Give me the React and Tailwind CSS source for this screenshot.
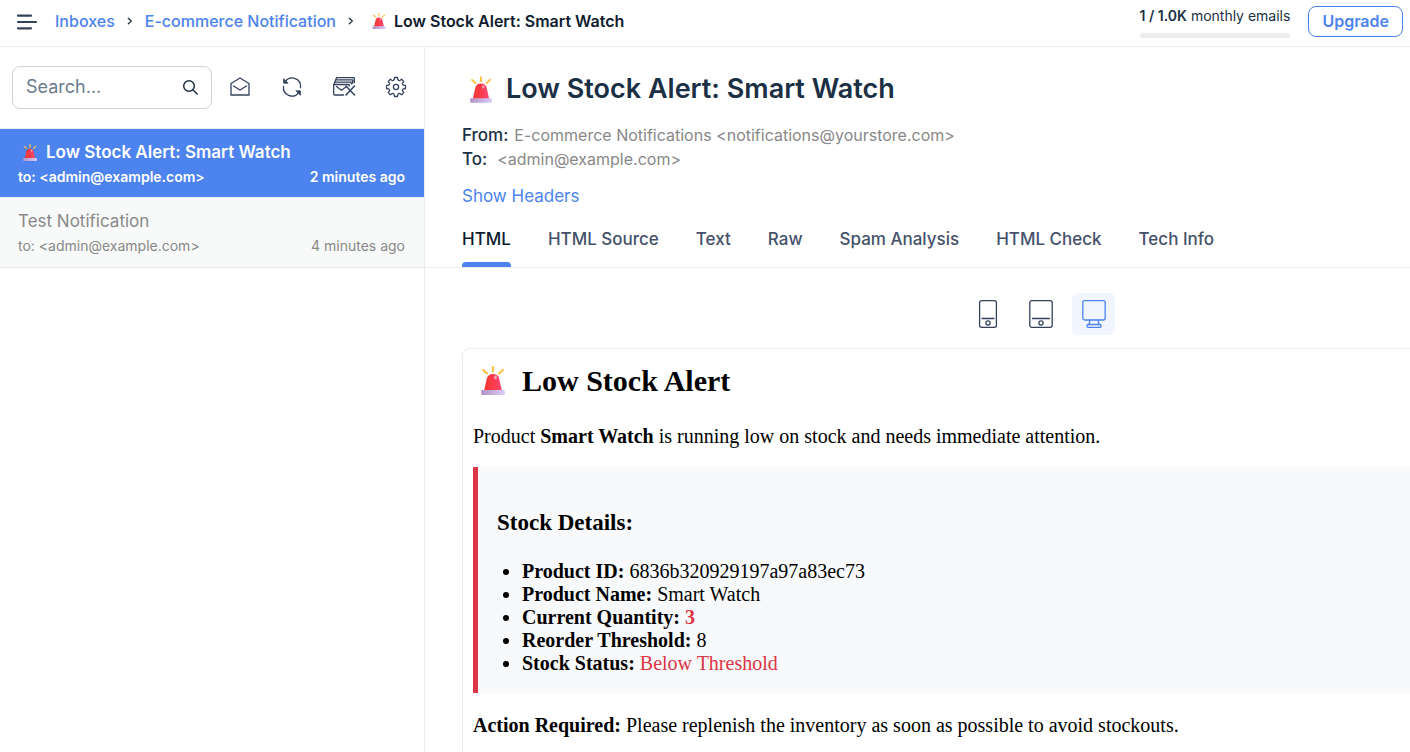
import { useId, useState } from "react";

function Siren({ className }) {
  const id = useId();
  return (
    <svg viewBox="0 0 24 29" className={className} fill="none" aria-hidden="true">
      <defs>
        <linearGradient id={id + "d"} x1="0" y1="0" x2="1" y2="0">
          <stop offset="0" stopColor="#f0392f" />
          <stop offset="0.5" stopColor="#fb3a4c" />
          <stop offset="1" stopColor="#fb4a78" />
        </linearGradient>
        <linearGradient id={id + "b"} x1="0" y1="0" x2="1" y2="0">
          <stop offset="0" stopColor="#b093c4" />
          <stop offset="1" stopColor="#dccbf8" />
        </linearGradient>
      </defs>
      <g stroke="#fbc248" strokeWidth="2.2" strokeLinecap="round">
        <path d="M12 1.200v4.300M2.200 4l3.600 3.400M21.800 4l-3.600 3.400" />
      </g>
      <path d="M3 25 5.800 12.500C6.600 9.500 8.600 8 12 8s5.400 1.500 6.200 4.500L21 25Z" fill={"url(#" + id + "d)"} />
      <ellipse cx="14.500" cy="11.500" rx="1.500" ry="1.900" fill="#ff9cab" />
      <rect x="0.200" y="24" width="23.600" height="5" rx="0.800" fill={"url(#" + id + "b)"} />
    </svg>
  );
}

function Icon({ children, className = "size-6", viewBox = "0 0 24 24" }) {
  return (
    <svg
      viewBox={viewBox}
      className={className}
      fill="none"
      stroke="currentColor"
      strokeWidth="1.3"
      strokeLinecap="round"
      strokeLinejoin="round"
      aria-hidden="true"
    >
      {children}
    </svg>
  );
}

const ChevronIcon = () => (
  <Icon className="h-2 w-1.5 text-[#1f2f46]" viewBox="0 0 6 8">
    <path d="M1.300 1.200 4.300 4l-3 2.800" />
  </Icon>
);

const gear = Array.from({ length: 8 }, (_, i) => {
  const at = (r, deg) => {
    const a = ((i * 45 + deg) * Math.PI) / 180;
    return `${(12 + r * Math.cos(a)).toFixed(2)} ${(12 + r * Math.sin(a)).toFixed(2)}`;
  };
  return `${i ? "L" : "M"}${at(9.6, -9)}L${at(9.6, 9)}L${at(7.9, 13)}Q${at(6.4, 22.5)} ${at(7.9, 32)}`;
}).join("") + "Z";

const toolbar = [
  {
    label: "Mark all as read",
    icon: (
      <Icon>
        <path d="M3 8.500 12 3l9 5.500V20H3Z" />
        <path d="m5.500 11 6.500 4 6.500-4" />
      </Icon>
    ),
  },
  {
    label: "Refresh",
    icon: (
      <Icon>
        <path d="M5.400 6.200A8.500 8.500 0 0 1 20.500 12.500M18.600 17.800A8.500 8.500 0 0 1 3.500 11.500" />
        <path d="M3.600 4v4.200h4.200ZM20.400 20v-4.200h-4.200Z" fill="currentColor" strokeWidth="0.800" />
      </Icon>
    ),
  },
  {
    label: "Delete all",
    icon: (
      <Icon>
        <path d="M11.500 20H2.700a1 1 0 0 1-1-1v-8.500a1 1 0 0 1 1-1h14.500v1.500" />
        <path d="m4.500 11.500 5 3.800 5-3.800" />
        <path d="M1.800 9.800 4.500 2.700h17.800v4.800M3.500 7.100h15.700v2M4 4.900h16.700v3.400" />
        <path d="m14 11 8.500 9M22.500 11 14 20" strokeWidth="1.500" />
      </Icon>
    ),
  },
  {
    label: "Settings",
    icon: (
      <Icon>
        <path d={gear} />
        <circle cx="12" cy="12" r="2.600" />
      </Icon>
    ),
  },
];

const messages = [
  { subject: "Low Stock Alert: Smart Watch", siren: true, age: "2 minutes ago" },
  { subject: "Test Notification", siren: false, age: "4 minutes ago" },
];

const tabs = ["HTML", "HTML Source", "Text", "Raw", "Spam Analysis", "HTML Check", "Tech Info"];

const devices = [
  {
    label: "Mobile",
    icon: (
      <Icon className="h-7 w-6" viewBox="0 0 24 28">
        <rect x="3.600" y="0.700" width="16.800" height="26.600" rx="2" />
        <path d="M6 18.500h12" />
        <circle cx="12" cy="23" r="2.100" />
      </Icon>
    ),
  },
  {
    label: "Tablet",
    icon: (
      <Icon className="h-7 w-6" viewBox="0 0 24 28">
        <rect x="0.800" y="0.700" width="22.400" height="26.600" rx="2" />
        <path d="M3.500 18.500h17" />
        <circle cx="12" cy="23" r="2.100" />
      </Icon>
    ),
  },
  {
    label: "Desktop",
    icon: (
      <Icon className="h-7 w-6" viewBox="0 0 24 28">
        <rect x="0.800" y="0.700" width="22.400" height="19.300" rx="2" />
        <path d="M8 20.200 7 24.500M16 20.200l1 4.300" />
        <rect x="5" y="24.500" width="14" height="2.800" rx="1" />
      </Icon>
    ),
  },
];

function TopBar() {
  return (
    <header className="flex h-[47px] shrink-0 items-center border-b border-[#ececec] pr-[7px] pl-4">
      <button type="button" aria-label="Menu" className="mr-[17px] text-[#34425c]">
        <svg viewBox="0 0 22 18" className="h-[18px] w-[22px]" stroke="currentColor" strokeWidth="2.200" strokeLinecap="round" aria-hidden="true">
          <path d="M2 1.700h13M2 8h18M2 14.300h13" />
        </svg>
      </button>
      <nav aria-label="Breadcrumb" className="flex items-center pb-1 text-base font-medium whitespace-nowrap">
        <a href="#inboxes" className="text-[#4c83ee]">Inboxes</a>
        <span className="mx-3"><ChevronIcon /></span>
        <a href="#inbox" className="text-[#4c83ee]">E-commerce Notification</a>
        <span className="mx-3"><ChevronIcon /></span>
        <span className="flex items-center font-semibold text-[#0d1b2e]">
          <Siren className="mr-2 ml-1.5 h-4 w-[14px]" />
          Low Stock Alert: Smart Watch
        </span>
      </nav>
      <div className="ml-auto flex items-center">
        <div className="mr-[18px] flex flex-col gap-[7px] pb-[3px]">
          <p className="text-sm leading-5 whitespace-nowrap text-[#1b2f45]">
            <b className="font-semibold">1 / 1.0K</b> monthly emails
          </p>
          <div className="h-[5px] rounded-full bg-[#ececec]" />
        </div>
        <button type="button" className="mb-1 h-[31px] rounded-lg border border-[#4c83ee] px-[13px] text-base font-semibold text-[#4c83ee]">
          Upgrade
        </button>
      </div>
    </header>
  );
}

function Sidebar() {
  return (
    <aside className="w-[425px] shrink-0 border-r border-[#ececec]">
      <div className="flex items-center border-b border-[#ececec] py-[19px] pr-4 pl-3">
        <label className="mr-4 flex h-[43px] min-w-0 flex-1 items-center rounded-lg border border-[#cdd1d8] pr-[9px] pb-0.5 pl-[13px]">
          <input
            type="search"
            aria-label="Search"
            placeholder="Search..."
            className="min-w-0 flex-1 text-lg text-[#1b2f45] outline-none placeholder:text-[#6b7b8d]"
          />
          <Icon className="size-6 text-[#1b2f45]">
            <g strokeWidth="1.500">
              <circle cx="11" cy="11" r="5.300" />
              <path d="m15 15 4.200 4" />
            </g>
          </Icon>
        </label>
        <div className="flex gap-7 pb-0.5 text-[#34425c]">
          {toolbar.map((t) => (
            <button key={t.label} type="button" aria-label={t.label}>{t.icon}</button>
          ))}
        </div>
      </div>
      <ul>
        {messages.map((m, i) => (
          <li key={m.subject} className={i === 0 ? "bg-[#4c83ee] font-semibold text-white" : "border-y border-[#ececec] bg-[#f8faf9] pb-px text-[#888]"}>
            <a href="#message" className="block pt-2.5 pr-[19px] pb-2 pl-[18px]">
              <p className="flex items-center text-[17px] leading-[26px]">
                {m.siren && <Siren className="mr-[9px] ml-[5px] h-[17px] w-[14px]" />}
                {m.subject}
              </p>
              <p className="flex justify-between text-sm leading-6">
                <span>to: &lt;admin@example.com&gt;</span>
                <span>{m.age}</span>
              </p>
            </a>
          </li>
        ))}
      </ul>
    </aside>
  );
}

function EmailBody() {
  return (
    <article className="ml-[37px] flex-1 rounded-tl-lg border-t border-l border-[#ececec] pt-[15px] pl-2.5 font-['Liberation_Serif',serif] text-[20px] leading-[23px] text-black">
      <h2 className="flex items-center text-[30px] leading-[33px] font-bold">
        <Siren className="mr-[17px] ml-2 h-[29px] w-6" />
        Low Stock Alert
      </h2>
      <p className="mt-7">
        Product <b>Smart Watch</b> is running low on stock and needs immediate attention.
      </p>
      <div className="mt-[19px] border-l-[5px] border-[#dc3545] bg-[#f8f9fa] px-[19px] pt-[43px] pb-[18px]">
        <h3 className="text-[23px] leading-[26px] font-bold">Stock Details:</h3>
        <ul className="mt-6 list-disc pl-[25px]">
          <li><b>Product ID:</b> 6836b320929197a97a83ec73</li>
          <li><b>Product Name:</b> Smart Watch</li>
          <li><b>Current Quantity:</b> <b className="text-[#dc3545]">3</b></li>
          <li><b>Reorder Threshold:</b> 8</li>
          <li><b>Stock Status:</b> <span className="text-[#dc3545]">Below Threshold</span></li>
        </ul>
      </div>
      <p className="mt-[21px]">
        <b>Action Required:</b> Please replenish the inventory as soon as possible to avoid stockouts.
      </p>
    </article>
  );
}

function Message() {
  const [tab, setTab] = useState("HTML");
  const [device, setDevice] = useState("Desktop");
  return (
    <main className="flex min-w-0 flex-1 flex-col">
      <div className="border-b border-[#ececec] pt-6 pl-[37px]">
        <h1 className="flex items-center text-[27px] leading-9 font-semibold text-[#1b2f45]">
          <Siren className="mr-3.5 ml-2 h-[27px] w-[22px]" />
          Low Stock Alert: Smart Watch
        </h1>
        <dl className="mt-4 text-base leading-6">
          <div className="flex gap-1.5">
            <dt className="text-[17px] font-medium text-[#1b2f45]">From:</dt>
            <dd className="text-[#888]">E-commerce Notifications &lt;notifications@yourstore.com&gt;</dd>
          </div>
          <div className="flex gap-2.5">
            <dt className="text-[17px] font-medium text-[#1b2f45]">To:</dt>
            <dd className="text-[#888]">&lt;admin@example.com&gt;</dd>
          </div>
        </dl>
        <a href="#headers" className="mt-3 inline-block text-[17px] leading-[26px] text-[#4c83ee]">Show Headers</a>
        <div role="tablist" className="mt-[17px] flex gap-[37px] text-[17px] leading-[26px] font-medium">
          {tabs.map((t) => (
            <button
              key={t}
              type="button"
              role="tab"
              aria-selected={t === tab}
              onClick={() => setTab(t)}
              className={t === tab ? "text-[#0d1b2e]" : "text-[#45516a]"}
            >
              {t}
              <span className={t === tab ? "mt-2.5 block h-[5px] rounded-t bg-[#4c83ee]" : "mt-2.5 block h-[5px]"} />
            </button>
          ))}
        </div>
      </div>
      <div className="flex justify-center gap-[10px] pt-[25px] pb-[13px] pl-[246px]">
        {devices.map((d) => (
          <button
            key={d.label}
            type="button"
            aria-label={d.label}
            aria-pressed={d.label === device}
            onClick={() => setDevice(d.label)}
            className={
              d.label === device
                ? "flex h-[42px] w-[43px] items-center justify-center rounded-md bg-[#f0f5ff] text-[#4c83ee]"
                : "flex h-[42px] w-[43px] items-center justify-center rounded-md text-[#34425c]"
            }
          >
            {d.icon}
          </button>
        ))}
      </div>
      <EmailBody />
    </main>
  );
}

export default function App() {
  return (
    <div className="flex h-screen flex-col overflow-hidden bg-white font-[Inter,sans-serif]">
      <TopBar />
      <div className="flex min-h-0 flex-1">
        <Sidebar />
        <Message />
      </div>
    </div>
  );
}
